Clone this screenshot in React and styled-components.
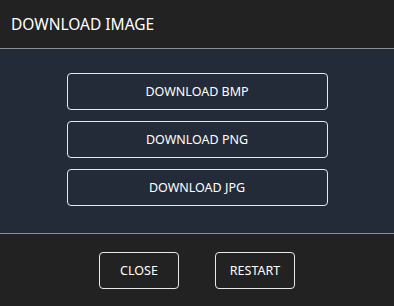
import React from 'react'
import styled, { createGlobalStyle } from 'styled-components'

const GlobalStyle = createGlobalStyle`
  html, body {
    margin: 0;
    padding: 0;
    background: #222222;
  }
  body {
    font-family: "Noto Sans", "Open Sans", sans-serif;
  }
`

const Dialog = styled.div`
  width: 394px;
  height: 306px;
  display: flex;
  flex-direction: column;
  background: #222222;
  color: #ffffff;
`

const Header = styled.div`
  height: 48px;
  display: flex;
  align-items: center;
  padding-left: 11px;
  font-size: 15.5px;
  border-bottom: 1px solid #8b8f95;
`

const Body = styled.div`
  flex: 1;
  background: #242b38;
  display: flex;
  flex-direction: column;
  align-items: center;
  gap: 11px;
  padding-top: 24px;
  border-bottom: 1px solid #8b8f95;
`

const Footer = styled.div`
  height: 72px;
  display: flex;
  align-items: center;
  justify-content: center;
  gap: 36px;
`

const Button = styled.button`
  box-sizing: border-box;
  width: ${p => p.$wide ? '261px' : '80px'};
  height: 37px;
  background: transparent;
  color: #ffffff;
  border: 1px solid #e8e8e8;
  border-radius: 4px;
  font-family: inherit;
  font-size: 12.5px;
  padding: 0;
  cursor: pointer;
`

const formats = ['BMP', 'PNG', 'JPG']

export default function App () {
  return (
    <>
      <GlobalStyle />
      <Dialog>
        <Header>DOWNLOAD IMAGE</Header>
        <Body>
          {formats.map(f => (
            <Button key={f} $wide>DOWNLOAD {f}</Button>
          ))}
        </Body>
        <Footer>
          <Button>CLOSE</Button>
          <Button>RESTART</Button>
        </Footer>
      </Dialog>
    </>
  )
}
